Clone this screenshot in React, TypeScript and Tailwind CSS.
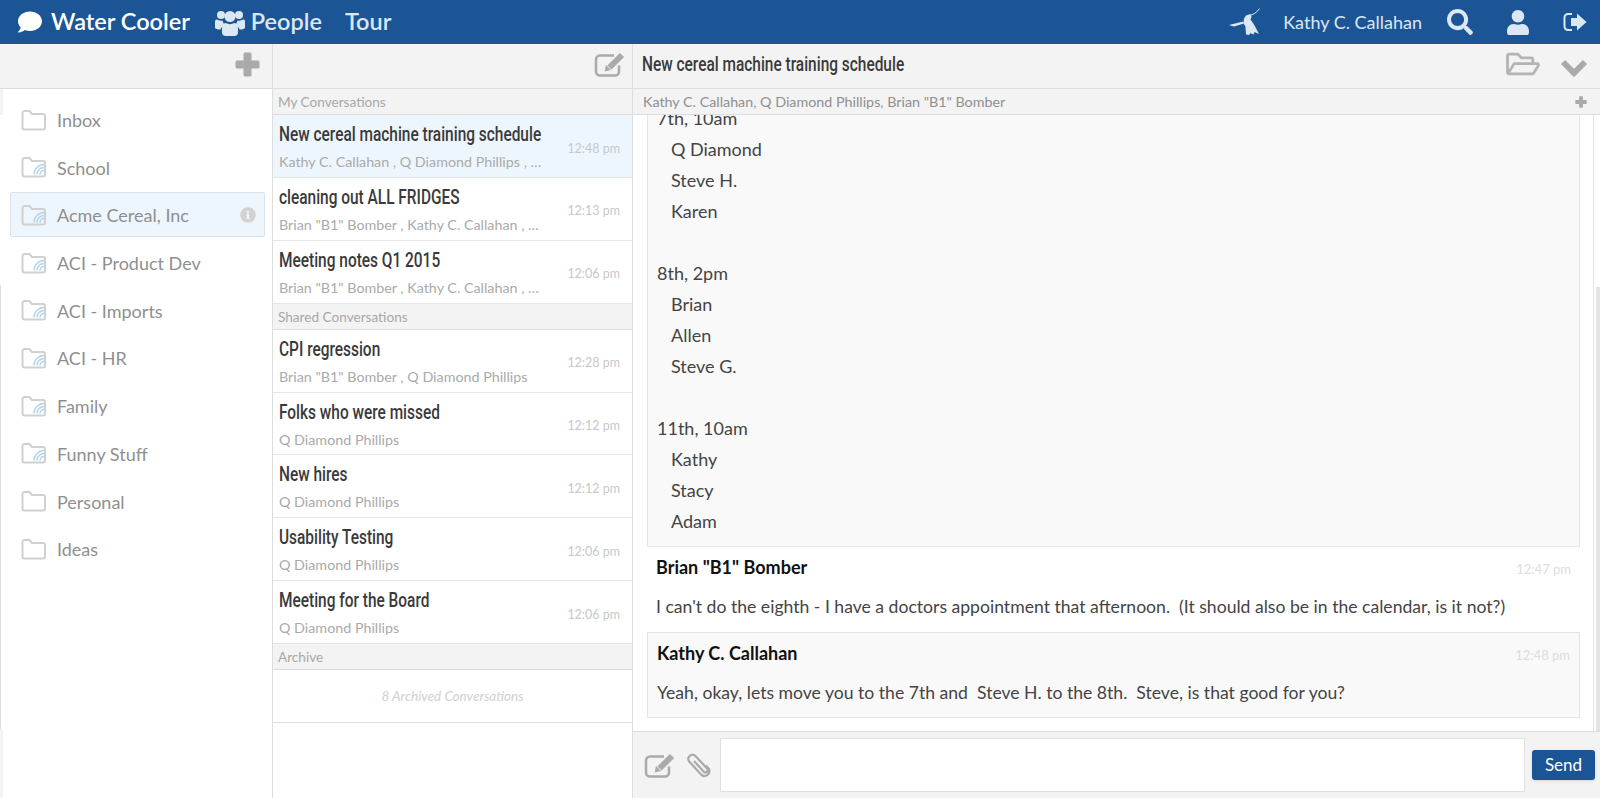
import { FaComment, FaSearch, FaUser, FaRegFolderOpen, FaInfoCircle } from "react-icons/fa"

const folders = [
  { name: "Inbox", shared: false },
  { name: "School", shared: true },
  { name: "Acme Cereal, Inc", shared: true, active: true },
  { name: "ACI - Product Dev", shared: true },
  { name: "ACI - Imports", shared: true },
  { name: "ACI - HR", shared: true },
  { name: "Family", shared: true },
  { name: "Funny Stuff", shared: true },
  { name: "Personal", shared: false },
  { name: "Ideas", shared: false },
]

const myConvos = [
  { title: "New cereal machine training schedule", people: "Kathy C. Callahan , Q Diamond Phillips , …", time: "12:48 pm", active: true },
  { title: "cleaning out ALL FRIDGES", people: 'Brian "B1" Bomber , Kathy C. Callahan , …', time: "12:13 pm" },
  { title: "Meeting notes Q1 2015", people: 'Brian "B1" Bomber , Kathy C. Callahan , …', time: "12:06 pm" },
]

const sharedConvos = [
  { title: "CPI regression", people: 'Brian "B1" Bomber , Q Diamond Phillips', time: "12:28 pm" },
  { title: "Folks who were missed", people: "Q Diamond Phillips", time: "12:12 pm" },
  { title: "New hires", people: "Q Diamond Phillips", time: "12:12 pm" },
  { title: "Usability Testing", people: "Q Diamond Phillips", time: "12:06 pm" },
  { title: "Meeting for the Board", people: "Q Diamond Phillips", time: "12:06 pm" },
]

const schedule = [
  { day: "7th, 10am", names: ["Q Diamond", "Steve H.", "Karen"] },
  { day: "8th, 2pm", names: ["Brian", "Allen", "Steve G."] },
  { day: "11th, 10am", names: ["Kathy", "Stacy", "Adam"] },
]

const FolderIcon = ({ shared }: { shared?: boolean }) => (
  <svg width="26" height="22" viewBox="0 0 26 22" fill="none" className="shrink-0">
    <path d="M1.500 4a2 2 0 0 1 2-2h5l2.500 3h11a2 2 0 0 1 2 2v11.500a2 2 0 0 1-2 2h-18.500a2 2 0 0 1-2-2z" stroke="#d0d0d0" strokeWidth="2" />
    {shared && (
      <g stroke="#aed6ee" strokeWidth="1.500" fill="none">
        <path d="M13 18.500a10 10 0 0 1 10-10" />
        <path d="M16 18.500a7 7 0 0 1 7-7" />
        <path d="M19 18.500a4 4 0 0 1 4-4" />
      </g>
    )}
  </svg>
)

const PlusIcon = ({ className }: { className: string }) => (
  <svg viewBox="0 0 25 25" className={className} fill="#aaaaaa">
    <rect x="8.500" y="0.500" width="8" height="24" rx="1.500" />
    <rect x="0.500" y="8.500" width="24" height="8" rx="1.500" />
  </svg>
)

const EditIcon = ({ className }: { className: string }) => (
  <svg viewBox="0 0 32 25" className={className} fill="none">
    <path d="M20 3.500H6a4 4 0 0 0-4 4v12a4 4 0 0 0 4 4h15a4 4 0 0 0 4-4v-6" stroke="#aaaaaa" strokeWidth="2.500" />
    <path d="M15.500 15.500L28 3" stroke="#aaaaaa" strokeWidth="6" />
    <path d="M10.500 19.500l1.500-6.500 5 5z" fill="#aaaaaa" />
  </svg>
)

const ConvoTitle = ({ children }: { children: string }) => (
  <div className="text-[21px] leading-[26px] font-medium whitespace-nowrap text-[#3a3a3a] font-['Roboto',sans-serif] origin-left scale-x-[0.735]">{children}</div>
)

const SectionLabel = ({ label }: { label: string }) => (
  <div className="h-[26px] shrink-0 flex items-center pl-[5px] pt-[2px] bg-[#f3f3f3] border-b border-[#dddddd] text-[13.600px] text-[#a8a8a8]">{label}</div>
)

const ConvoRow = ({ title, people, time, active }: { title: string; people: string; time: string; active?: boolean }) => (
  <div className={`h-[62.900px] shrink-0 flex items-center pl-[6px] pr-[12px] pt-[1px] border-b border-[#e6e6e6] ${active ? "bg-[#eef6fd]" : "bg-white"}`}>
    <div className="flex-1 min-w-0">
      <ConvoTitle>{title}</ConvoTitle>
      <div className="text-[14.300px] leading-[20px] mt-[5px] text-[#aaaaaa] whitespace-nowrap">{people}</div>
    </div>
    <div className="w-[60px] pt-[5px] text-right text-[12.500px] text-[#c8c8c8] shrink-0">{time}</div>
  </div>
)

const App = () => {
  return (
    <div className="w-[1600px] h-[798px] flex flex-col overflow-hidden bg-white font-['Lato',sans-serif]">
      <header className="h-[44px] shrink-0 bg-[#1c5596] flex items-center justify-between pl-[16px] pr-[13px] text-[#dbe7f3]">
        <div className="flex items-center text-[23.500px] font-semibold">
          <FaComment className="text-white w-[28px] h-[24px] mr-[7px]" />
          <span className="text-white">Water Cooler</span>
          <svg viewBox="0 0 30 27" className="w-[30px] h-[27px] ml-[25px] mr-[6px]" fill="#dbe7f3">
            <circle cx="6" cy="6" r="4" />
            <circle cx="24" cy="6" r="4" />
            <circle cx="15" cy="7.500" r="5.500" />
            <path d="M0 12.500c0-1.500 1-2 2-2 1.500 1 3.500 1.500 5.500 1 .5 2 1.500 3.500 2.500 4.500-2.500 1-4 2.500-4.500 4.500-3 0-5.500-.5-5.500-2z" />
            <path d="M30 12.500c0-1.500-1-2-2-2-1.500 1-3.500 1.500-5.500 1-.5 2-1.500 3.500-2.500 4.500 2.500 1 4 2.500 4.500 4.500 3 0 5.500-.5 5.500-2z" />
            <path d="M10.500 14c3 1.500 6 1.500 9 0 2 .5 3.500 2 3.500 4.500v5c0 2-1.500 3.500-3.500 3.500h-9c-2 0-3.500-1.500-3.500-3.500v-5c0-2.500 1.500-4 3.500-4.500z" />
          </svg>
          <span>People</span>
          <span className="ml-[23px]">Tour</span>
        </div>
        <div className="flex items-center">
          <svg width="31" height="28" viewBox="0 0 31 28" className="mr-[23px]" fill="#dbe7f3">
            <path d="M0 17l14-3.500 1 2-10 3z" />
            <path d="M17 7.500l4.500-1.500 1 3 -1 2.500 3.500 5 5 9.500-4.500-2-1 2.500-3.500-1.500-.5 2-3.500-.5-.5-8-2-3 .5-5z" />
            <path d="M20 7.500c4-.5 8-3 10.500-7" stroke="#dbe7f3" strokeWidth="1" fill="none" />
          </svg>
          <span className="text-[18px]">Kathy C. Callahan</span>
          <FaSearch className="w-[26px] h-[26px] ml-[25px]" />
          <FaUser className="w-[22px] h-[25px] ml-[34px]" />
          <svg viewBox="0 0 24 20" className="w-[24px] h-[20px] ml-[34px]" fill="#dbe7f3">
            <path d="M9 2H5a3.500 3.500 0 0 0-3.500 3.500v9A3.500 3.500 0 0 0 5 18h4" stroke="#dbe7f3" strokeWidth="2" fill="none" />
            <path d="M8 6h6V1.500L23.500 10 14 18.500V14H8z" />
          </svg>
        </div>
      </header>

      <div className="flex-1 flex min-h-0">
        <aside className="relative w-[273px] shrink-0 border-r border-[#dddddd] flex flex-col">
          <div className="h-[45px] shrink-0 bg-[#f3f3f3] border-b border-[#dddddd] flex items-center justify-end pr-[12px] pb-[4px]">
            <PlusIcon className="w-[25px] h-[25px]" />
          </div>
          <div className="absolute left-0 top-[45px] w-[3px] h-[26px] bg-[#f3f3f3]" />
          <div className="absolute left-0 top-[241px] w-[1px] h-[444px] bg-[#dddddd]" />
          <div className="absolute left-0 bottom-0 w-[3px] h-[69px] bg-[#f3f3f3]" />
          <div className="pt-[8px] pl-[10px] pr-[7px]">
            {folders.map((folder) => (
              <div
                key={folder.name}
                className={`h-[45px] mb-[2.700px] flex items-center pl-[10px] pr-[8px] rounded-[2px] border text-[18px] text-[#8f8f8f] ${folder.active ? "bg-[#eef6fd] border-[#dbe3ea]" : "border-transparent"}`}
              >
                <FolderIcon shared={folder.shared} />
                <span className="ml-[10px] pt-[2px] flex-1">{folder.name}</span>
                {folder.active && <FaInfoCircle className="w-[16px] h-[16px] text-[#d2d2d2]" />}
              </div>
            ))}
          </div>
        </aside>

        <section className="w-[360px] shrink-0 border-r border-[#dddddd] flex flex-col">
          <div className="h-[45px] shrink-0 bg-[#f3f3f3] border-b border-[#dddddd] flex items-center justify-end pr-[6px] pb-[4px]">
            <EditIcon className="w-[32px] h-[25px]" />
          </div>
          <SectionLabel label="My Conversations" />
          {myConvos.map((c) => <ConvoRow key={c.title} {...c} />)}
          <SectionLabel label="Shared Conversations" />
          {sharedConvos.map((c) => <ConvoRow key={c.title} {...c} />)}
          <SectionLabel label="Archive" />
          <div className="h-[53px] flex items-center justify-center border-b border-[#dddddd] text-[13.500px] italic text-[#d0d0d0]">8 Archived Conversations</div>
        </section>

        <main className="flex-1 min-w-0 flex flex-col">
          <div className="h-[45px] shrink-0 bg-[#f3f3f3] border-b border-[#dddddd] flex items-center pl-[9px] pr-[12px] pb-[4px]">
            <div className="flex-1">
              <ConvoTitle>New cereal machine training schedule</ConvoTitle>
            </div>
            <FaRegFolderOpen className="w-[34px] h-[30px] text-[#b4b4b4]" />
            <svg viewBox="0 0 28 19" className="w-[28px] h-[19px] ml-[20px] mt-[6px]" fill="none">
              <path d="M3 4l11 11L25 4" stroke="#aaaaaa" strokeWidth="6" />
            </svg>
          </div>
          <div className="h-[26px] shrink-0 bg-[#f3f3f3] border-b border-[#dddddd] flex items-center justify-between pl-[10px] pr-[13px] text-[14.300px] text-[#8f8f8f]">
            <span className="pt-[1px]">Kathy C. Callahan, Q Diamond Phillips, Brian "B1" Bomber</span>
            <PlusIcon className="w-[12px] h-[12px]" />
          </div>

          <div className="flex-1 min-h-0 flex">
            <div className="flex-1 min-w-0 overflow-hidden pl-[14px] pr-[13px] text-[#444444]">
              <div className="-mt-[13px] h-[445px] pl-[9px] bg-[#f9f9f9] border border-[#e4e4e4] leading-[31px] text-[18px]">
                {schedule.map((s) => (
                  <div key={s.day} className="mb-[31px] last:mb-0">
                    <div>{s.day}</div>
                    {s.names.map((n) => <div key={n} className="pl-[14px]">{n}</div>)}
                  </div>
                ))}
              </div>
              <div className="px-[9px] pt-[7px] h-[85px]">
                <div className="flex items-center justify-between h-[26px]">
                  <span className="text-[#111111] font-bold text-[18px]">Brian "B1" Bomber</span>
                  <span className="text-[13px] pt-[5px] text-[#dddddd]">12:47 pm</span>
                </div>
                <div className="mt-[14px] leading-[26px] text-[17.600px] whitespace-pre">I can't do the eighth - I have a doctors appointment that afternoon.  (It should also be in the calendar, is it not?)</div>
              </div>
              <div className="px-[9px] pt-[7px] h-[86px] bg-[#f9f9f9] border border-[#e4e4e4]">
                <div className="flex items-center justify-between h-[26px]">
                  <span className="text-[#111111] font-bold text-[18px]">Kathy C. Callahan</span>
                  <span className="text-[13px] pt-[5px] text-[#dddddd]">12:48 pm</span>
                </div>
                <div className="mt-[14px] leading-[26px] text-[17.600px] whitespace-pre">Yeah, okay, lets move you to the 7th and  Steve H. to the 8th.  Steve, is that good for you?</div>
              </div>
            </div>
            <div className="w-[7px] shrink-0 border-l border-[#e4e4e4] bg-white flex justify-end">
              <div className="w-[4px] mt-[172px] bg-[#e4e4e4]" />
            </div>
          </div>

          <div className="h-[67px] shrink-0 bg-[#f3f3f3] border-t border-[#dddddd] flex items-center pl-[11px] pr-[5px]">
            <EditIcon className="w-[32px] h-[25px]" />
            <svg viewBox="0 0 26 27" className="w-[26px] h-[27px] ml-[10px]" fill="none">
              <path d="M8 9L18 20A2.400 2.400 0 0 0 21.500 17L9.500 4A4.200 4.200 0 0 0 3.200 9.500L15.500 23A5 5 0 0 0 23 17L20 13.500" stroke="#aaaaaa" strokeWidth="2.200" />
            </svg>
            <div className="ml-[8px] flex-1 h-[54px] bg-white border border-[#e0e0e0]" />
            <button className="ml-[7px] w-[63px] h-[30px] rounded-[3px] bg-[#1c5596] text-white text-[17px] shadow-sm">Send</button>
          </div>
        </main>
      </div>
    </div>
  )
}

export default App
